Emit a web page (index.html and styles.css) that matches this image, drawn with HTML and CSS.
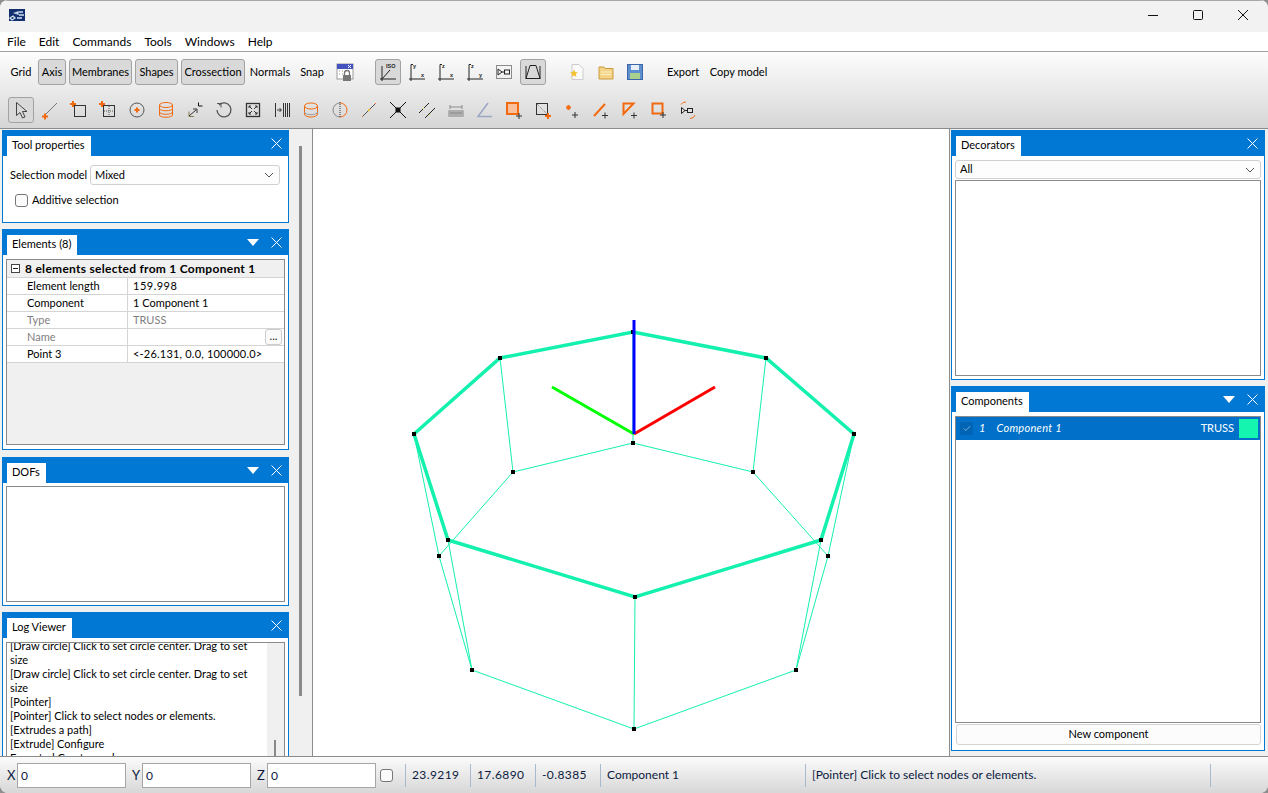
FILE: index.html
```html
<!DOCTYPE html>
<html lang="en">
<head>
<meta charset="utf-8">
<title>Truss modeller</title>
<link rel="stylesheet" href="styles.css">
</head>
<body>
<div class="app">
  <header class="titlebar">
    <svg class="applogo" width="16" height="12" viewBox="0 0 16 12"><rect width="16" height="12" fill="#12306e"/><path d="M1 9l3-2 2 2-3 2zM6 4l3-1v2zM10 3h4M10 6h5M8 9h5" stroke="#cfe0f5" stroke-width="1.3" fill="none"/></svg>
    <div class="winctl">
      <svg width="12" height="12" viewBox="0 0 12 12"><path d="M1 6.500h10" stroke="#111" fill="none"/></svg>
      <svg width="12" height="12" viewBox="0 0 12 12"><rect x="1.500" y="1.500" width="9" height="9" rx="1" stroke="#111" fill="none"/></svg>
      <svg width="12" height="12" viewBox="0 0 12 12"><path d="M1 1l10 10M11 1L1 11" stroke="#111" fill="none"/></svg>
    </div>
  </header>
  <nav class="menubar"><span>File</span><span>Edit</span><span>Commands</span><span>Tools</span><span>Windows</span><span>Help</span></nav>

  <div class="toolbar">
    <div class="row row1">
      <span class="t w26">Grid</span>
      <span class="t w28 on ml1">Axis</span>
      <span class="t w63 on">Membranes</span>
      <span class="t w43 on">Shapes</span>
      <span class="t w64 on">Crossection</span>
      <span class="t w44">Normals</span>
      <span class="t w34">Snap</span>
      <span class="i">
        <svg viewBox="0 0 20 20"><rect x="2" y="2" width="16" height="15" fill="#fff" stroke="#999"/><rect x="2" y="2" width="16" height="5" fill="#4452bd"/><path d="M13 3l3 3M16 3l-3 3" stroke="#fff"/><path d="M4 9h1M7 9h1M10 9h1M4 12h1M7 12h1" stroke="#999"/><rect x="8" y="13" width="8" height="6" fill="#777"/><path d="M9.500 13v-2a2.500 2.500 0 0 1 5 0v2" fill="none" stroke="#777" stroke-width="1.300"/></svg>
      </span>
      <span class="i on ml14">
        <svg viewBox="0 0 20 20"><path d="M4 4v13h14M4 17L12 8" fill="none" stroke="#222"/><path d="M2 17h2M4 17v2" stroke="#222"/><text x="8" y="6" class="mini">ISO</text></svg>
      </span>
      <span class="i"><svg viewBox="0 0 20 20"><path d="M4 2.500v14.500h14M4 2.500h2M2 17h2M4 17v2" fill="none" stroke="#222"/><text x="6" y="6" class="mini">y</text><text x="14" y="15" class="mini">x</text></svg></span>
      <span class="i"><svg viewBox="0 0 20 20"><path d="M4 2.500v14.500h14M4 2.500h2M2 17h2M4 17v2" fill="none" stroke="#222"/><text x="6" y="6" class="mini">z</text><text x="14" y="15" class="mini">x</text></svg></span>
      <span class="i"><svg viewBox="0 0 20 20"><path d="M4 2.500v14.500h14M4 2.500h2M2 17h2M4 17v2" fill="none" stroke="#222"/><text x="6" y="6" class="mini">z</text><text x="14" y="15" class="mini">y</text></svg></span>
      <span class="i"><svg viewBox="0 0 20 20"><rect x="2.500" y="3.500" width="15" height="13" fill="none" stroke="#222" stroke-dasharray="1 1"/><path d="M4 7v6l4-3zM8 10h2" fill="none" stroke="#222"/><rect x="10.500" y="8" width="5" height="4" fill="none" stroke="#222"/></svg></span>
      <span class="i on"><svg viewBox="0 0 20 20"><path d="M3 4v13M17 4v13M3 16.500h14M3 16.500L7 3.500h6l4 13" fill="none" stroke="#222"/></svg></span>
      <span class="i ml15"><svg viewBox="0 0 20 20"><path d="M5 2.500h7l4 4v11H5z" fill="#fafafa" stroke="#ccc"/><path d="M7 7.500l1.200 2.400 2.600.4-1.900 1.800.5 2.600L7 13.500l-2.400 1.200.5-2.600-1.900-1.800 2.600-.4z" fill="#f2c230"/></svg></span>
      <span class="i"><svg viewBox="0 0 20 20"><path d="M3 5h5l1 1.500h8V17H3z" fill="#f5d488" stroke="#c99a3c"/><path d="M5 10h10M5 12.500h10" stroke="#fbeec4"/></svg></span>
      <span class="i"><svg viewBox="0 0 20 20"><rect x="2.500" y="2.500" width="15" height="15" fill="#5d8fd0" stroke="#3b66a8"/><rect x="6" y="3" width="8" height="5" fill="#e8eef7"/><rect x="5" y="11" width="10" height="6" fill="#a9d08e"/></svg></span>
      <span class="t w38 ml13">Export</span>
      <span class="t w61 ml3">Copy model</span>
    </div>
    <div class="row row2">
      <span class="i on"><svg viewBox="0 0 20 20"><path d="M5.500 2.500v13l3.500-3 2.500 5.500 2.500-1-2.500-5.500h4.500z" fill="none" stroke="#444"/></svg></span>
      <span class="i"><svg viewBox="0 0 20 20"><path d="M6 14L17 3" stroke="#777"/><path d="M2 16.500h6M5 13.500v6" stroke="#f26a10" stroke-width="2"/></svg></span>
      <span class="i"><svg viewBox="0 0 20 20"><rect x="5.500" y="5.500" width="11" height="11" fill="none" stroke="#333"/><path d="M1 4h6M4 1v6" stroke="#f26a10" stroke-width="2"/></svg></span>
      <span class="i"><svg viewBox="0 0 20 20"><rect x="5.500" y="5.500" width="11" height="11" fill="none" stroke="#333"/><path d="M11 6v10M6 11h10" stroke="#555" stroke-dasharray="1 1"/><path d="M1 4h6M4 1v6" stroke="#f26a10" stroke-width="2"/></svg></span>
      <span class="i"><svg viewBox="0 0 20 20"><circle cx="10" cy="10" r="7" fill="none" stroke="#555"/><path d="M7.500 10h5M10 7.500v5" stroke="#f26a10" stroke-width="2"/></svg></span>
      <span class="i"><svg viewBox="0 0 20 20"><ellipse cx="10" cy="5" rx="6.500" ry="2.500" fill="none" stroke="#f26a10"/><path d="M3.500 5v10c0 3 13 3 13 0V5M3.500 8.500c0 3 13 3 13 0M3.500 12c0 3 13 3 13 0" fill="none" stroke="#f26a10"/></svg></span>
      <span class="i"><svg viewBox="0 0 20 20"><path d="M4 11.500v5h5" fill="none" stroke="#8a7a55"/><path d="M4 16l7-6M8 9h4v4" fill="none" stroke="#333"/><path d="M13.500 2.500v3.500h4" fill="none" stroke="#111"/></svg></span>
      <span class="i"><svg viewBox="0 0 20 20"><path d="M5 5a7 7 0 1 1-2 5" fill="none" stroke="#555" stroke-width="1.300"/><path d="M3 3.500h4v4" fill="none" stroke="#555"/></svg></span>
      <span class="i"><svg viewBox="0 0 20 20"><rect x="3.500" y="3.500" width="13" height="13" fill="none" stroke="#333" stroke-width="1.300"/><path d="M6 6l3 3M14 6l-3 3M6 14l3-3M14 14l-3-3M6 6h2M6 6v2M14 6h-2M14 6v2M6 14h2M6 14v-2M14 14h-2M14 14v-2" stroke="#333" fill="none"/></svg></span>
      <span class="i"><svg viewBox="0 0 20 20"><path d="M3.500 3v14M5 10h4M7.500 8l2 2-2 2M11.500 3v14M13.500 3v14M15.500 3v14M17.500 3v14" stroke="#333" fill="none"/></svg></span>
      <span class="i"><svg viewBox="0 0 20 20"><ellipse cx="10" cy="6" rx="6.500" ry="3" fill="none" stroke="#f26a10"/><path d="M3.500 6v8c0 4 13 4 13 0V6" fill="none" stroke="#f26a10"/><path d="M3.500 12c0 3.500 13 3.500 13 0" fill="none" stroke="#999"/></svg></span>
      <span class="i"><svg viewBox="0 0 20 20"><path d="M10 3a7 7 0 0 0 0 14" fill="none" stroke="#888"/><path d="M10 3a7 7 0 0 1 0 14" fill="none" stroke="#f26a10"/><path d="M10 2v16" stroke="#333" stroke-dasharray="1 1"/></svg></span>
      <span class="i"><svg viewBox="0 0 20 20"><path d="M3 17L17 3" stroke="#555"/><path d="M9 11l2-2" stroke="#e8b010" stroke-width="1.500"/><path d="M3 17l1-1M16 4l1-1" stroke="#f26a10"/></svg></span>
      <span class="i"><svg viewBox="0 0 20 20"><path d="M2 2l16 16M18 2L2 18" stroke="#111"/><rect x="7.500" y="7.500" width="5" height="5" fill="#111"/></svg></span>
      <span class="i"><svg viewBox="0 0 20 20"><path d="M2 13L12 3M8 18L18 8" stroke="#222"/><path d="M6 9l1-1M12 15l1-1" stroke="#e8d820"/></svg></span>
      <span class="i"><svg viewBox="0 0 20 20"><rect x="2" y="10" width="16" height="7" rx="1" fill="#aeaeae"/><path d="M4 7h12M4 5v4M16 5v4M4 13h12" stroke="#8a8a8a" fill="none"/></svg></span>
      <span class="i"><svg viewBox="0 0 20 20"><path d="M13 3L3 16.500h14" fill="none" stroke="#9aa6c4" stroke-width="1.500"/></svg></span>
      <span class="i"><svg viewBox="0 0 20 20"><rect x="3" y="3" width="11" height="11" fill="#fbbf9c" stroke="#f26a10" stroke-width="2"/><path d="M12 16h6M15 13v6" stroke="#333"/></svg></span>
      <span class="i"><svg viewBox="0 0 20 20"><rect x="3.500" y="3.500" width="11" height="11" fill="none" stroke="#333"/><path d="M4 4l10 10" stroke="#777" stroke-dasharray="1 1"/><path d="M12 16h6M15 13v6" stroke="#f26a10" stroke-width="2"/></svg></span>
      <span class="i"><svg viewBox="0 0 20 20"><path d="M4 7.500h5M6.500 5v5" stroke="#f26a10" stroke-width="2.200"/><path d="M10 15h6M13 12v6" stroke="#333"/></svg></span>
      <span class="i"><svg viewBox="0 0 20 20"><path d="M3 16L14 4" stroke="#f26a10" stroke-width="2"/><path d="M11 15.500h6M14 12.500v6" stroke="#333"/></svg></span>
      <span class="i"><svg viewBox="0 0 20 20"><path d="M3.500 3.500h10L3.500 14z" fill="none" stroke="#f26a10" stroke-width="2"/><path d="M11 15.500h6M14 12.500v6" stroke="#333"/></svg></span>
      <span class="i"><svg viewBox="0 0 20 20"><rect x="3.500" y="3.500" width="10" height="10" fill="none" stroke="#f26a10" stroke-width="2"/><path d="M11 15h6M14 12v6" stroke="#333"/></svg></span>
      <span class="i"><svg viewBox="0 0 20 20"><path d="M3 4.500a5 5 0 0 1 5-2.500M12 18.500a5 5 0 0 0 5-3.500" fill="none" stroke="#f26a10"/><path d="M3.500 7.500v6l3.500-3zM7 10.500h2" fill="none" stroke="#222"/><rect x="9.500" y="8.500" width="5" height="4" fill="none" stroke="#222"/></svg></span>
    </div>
  </div>

  <main class="main">
    <aside class="leftcol">
      <div class="stack">
        <section class="panel p-tool">
          <div class="phead"><span class="ptab">Tool properties</span><span class="pbtns"><svg class="x" viewBox="0 0 11 11"><path d="M.5.5l10 10M10.500.5l-10 10"/></svg></span></div>
          <div class="pbody tool-body">
            <div class="selrow"><span class="sellab">Selection model</span><div class="combo grow"><span>Mixed</span><svg class="chev" viewBox="0 0 10 6"><path d="M1 1l4 4 4-4"/></svg></div></div>
            <label class="checkrow"><span class="cb"></span><span>Additive selection</span></label>
          </div>
        </section>
        <section class="panel p-elem">
          <div class="phead"><span class="ptab">Elements (8)</span><span class="pbtns"><span class="tri"></span><svg class="x" viewBox="0 0 11 11"><path d="M.5.5l10 10M10.500.5l-10 10"/></svg></span></div>
          <div class="pbody prop-wrap">
            <div class="props">
              <div class="phdr"><span class="minus"></span><b>8 elements selected from 1 Component 1</b></div>
              <div class="prow"><span>Element length</span><span class="num">159.998</span></div>
              <div class="prow"><span>Component</span><span>1 Component 1</span></div>
              <div class="prow dim"><span>Type</span><span>TRUSS</span></div>
              <div class="prow dim"><span>Name</span><span></span><em class="dots">...</em></div>
              <div class="prow"><span>Point 3</span><span class="pt">&lt;-26.131, 0.0, 100000.0&gt;</span></div>
            </div>
          </div>
        </section>
        <section class="panel p-dof">
          <div class="phead"><span class="ptab">DOFs</span><span class="pbtns"><span class="tri"></span><svg class="x" viewBox="0 0 11 11"><path d="M.5.5l10 10M10.500.5l-10 10"/></svg></span></div>
          <div class="pbody inset-wrap"><div class="inset"></div></div>
        </section>
        <section class="panel p-log">
          <div class="phead"><span class="ptab">Log Viewer</span><span class="pbtns"><svg class="x" viewBox="0 0 11 11"><path d="M.5.5l10 10M10.500.5l-10 10"/></svg></span></div>
          <div class="pbody log-wrap">
            <div class="log">
              <div class="logtext">
                <p>[Draw circle] Click to set circle center. Drag to set size</p>
                <p>[Draw circle] Click to set circle center. Drag to set size</p>
                <p>[Pointer]</p>
                <p>[Pointer] Click to select nodes or elements.</p>
                <p>[Extrudes a path]</p>
                <p>[Extrude] Configure</p>
                <p>Executed Create mesh</p>
              </div>
              <div class="vscroll"><span class="thumb"></span></div>
            </div>
          </div>
        </section>
      </div>
      <div class="split"><span class="grip"></span></div>
    </aside>

    <div class="canvas">
      <svg class="scene" viewBox="313 129 636 627" width="636" height="627">
        <g class="thin">
          <path d="M633 443L753 472L828 556L796 670L634 729L472 670L439 556L513 472Z"/>
          <path d="M633 332V443M500 358L513 472M766 358L753 472M414 434L439 556M854 434L828 556M448 540L472 670M821 540L796 670M635 597L634 729"/>
        </g>
        <path class="thick" d="M633 332L766 358L854 434L821 540L635 597L448 540L414 434L500 358Z"/>
        <g class="nodes">
          <rect x="631" y="441" width="4" height="4"/><rect x="751" y="470" width="4" height="4"/><rect x="826" y="554" width="4" height="4"/><rect x="794" y="668" width="4" height="4"/><rect x="632" y="727" width="4" height="4"/><rect x="470" y="668" width="4" height="4"/><rect x="437" y="554" width="4" height="4"/><rect x="511" y="470" width="4" height="4"/>
          <rect x="631" y="330" width="4" height="4"/><rect x="764" y="356" width="4" height="4"/><rect x="852" y="432" width="4" height="4"/><rect x="819" y="538" width="4" height="4"/><rect x="633" y="595" width="4" height="4"/><rect x="446" y="538" width="4" height="4"/><rect x="412" y="432" width="4" height="4"/><rect x="498" y="356" width="4" height="4"/>
        </g>
        <path class="ax" stroke="#00ff00" d="M634 434L552 387"/>
        <path class="ax" stroke="#ff0000" d="M634 434L715 387"/>
        <path class="ax" stroke="#0000ff" d="M634 320V434"/>
      </svg>
    </div>

    <aside class="rightcol">
      <section class="panel p-deco">
        <div class="phead"><span class="ptab">Decorators</span><span class="pbtns"><svg class="x" viewBox="0 0 11 11"><path d="M.5.5l10 10M10.500.5l-10 10"/></svg></span></div>
        <div class="pbody deco-body">
          <div class="combo flat"><span>All</span><svg class="chev" viewBox="0 0 10 6"><path d="M1 1l4 4 4-4"/></svg></div>
          <div class="inset"></div>
        </div>
      </section>
      <section class="panel p-comp">
        <div class="phead"><span class="ptab">Components</span><span class="pbtns"><span class="tri"></span><svg class="x" viewBox="0 0 11 11"><path d="M.5.5l10 10M10.500.5l-10 10"/></svg></span></div>
        <div class="pbody comp-body">
          <div class="inset complist">
            <div class="compitem">
              <span class="compcheck"><svg viewBox="0 0 10 8"><path d="M1 4l2.500 2.500L9 1"/></svg></span>
              <i class="compnum">1</i><i class="compname">Component 1</i>
              <span class="comptype">TRUSS</span><span class="swatch"></span>
            </div>
          </div>
          <div class="newbtn">New component</div>
        </div>
      </section>
    </aside>
  </main>

  <footer class="status">
    <span class="lab">X</span><span class="field">0</span>
    <span class="lab">Y</span><span class="field">0</span>
    <span class="lab">Z</span><span class="field">0</span>
    <span class="cb cb-s"></span>
    <span class="cell c-num">23.9219</span>
    <span class="cell c-num">17.6890</span>
    <span class="cell c-num">-0.8385</span>
    <span class="cell c-comp">Component 1</span>
    <span class="cell c-msg">[Pointer] Click to select nodes or elements.</span>
    <span class="cell"></span>
  </footer>
</div>
</body>
</html>
```
FILE: styles.css
```css
* { box-sizing: border-box; }
html, body { margin: 0; padding: 0; background: #8f8f8f; }
body { font: 11px/15px Lato, "Noto Sans", sans-serif; color: #000; }
.app { width: 1268px; height: 793px; display: flex; flex-direction: column; overflow: hidden; background: #f0f0f0; border-radius: 8px; }

.titlebar { height: 32px; flex: none; display: flex; align-items: center; background: #f2f2f2; padding-left: 9px; border-top: 1px solid #a8a8a8; }
.applogo { margin-top: -4px; }
.winctl { margin-left: auto; display: flex; gap: 33px; padding-right: 19px; margin-top: -3px; }

.menubar { height: 20px; flex: none; display: flex; gap: 13px; align-items: center; padding: 0 7px 1px; background: #fff; border-bottom: 1px solid #a3a3a3; font-size: 12px; }

.toolbar { height: 77px; flex: none; padding: 7px 0 0 8px; background: linear-gradient(#fdfdfd, #d6d6d6); border-bottom: 1px solid #8c8c8c; display: flex; flex-direction: column; gap: 12px; }
.row { display: flex; gap: 3px; height: 26px; align-items: center; }
.t { height: 26px; display: flex; align-items: center; justify-content: center; border: 1px solid transparent; border-radius: 3px; white-space: nowrap; padding-bottom: 1px; }
.i { width: 26px; height: 26px; display: flex; align-items: center; justify-content: center; border: 1px solid transparent; border-radius: 3px; flex: none; }
.i svg { width: 20px; height: 20px; display: block; }
.on { background: #d9d9d9; border-color: #a2a2a2; }
.mini { font: 700 5.500px "Liberation Sans", sans-serif; fill: #222; }
.w26 { width: 26px; } .w28 { width: 28px; } .w63 { width: 63px; } .w43 { width: 43px; } .w64 { width: 64px; }
.w44 { width: 44px; } .w34 { width: 34px; } .w38 { width: 38px; } .w61 { width: 61px; }
.ml1 { margin-left: 1px; } .ml3 { margin-left: 3px; } .ml13 { margin-left: 13px; } .ml14 { margin-left: 14px; } .ml15 { margin-left: 15px; }

.main { flex: 1; min-height: 0; display: flex; background: #f0f0f0; overflow: hidden; }
.leftcol { width: 313px; flex: none; display: flex; border-right: 1px solid #8c8c8c; padding: 1px 0 0 2px; }
.stack { width: 287px; flex: none; display: flex; flex-direction: column; overflow: hidden; }
.split { flex: 1; padding: 16px 0 0 10px; }
.grip { display: block; width: 3px; height: 550px; background: #8a8a8a; }

.panel { border: 1px solid #0078d4; display: flex; flex-direction: column; background: #f0f0f0; flex: none; }
.p-tool { height: 93px; margin-bottom: 6px; }
.p-elem { height: 221px; margin-bottom: 7px; }
.p-dof { height: 149px; margin-bottom: 6px; }
.p-log { height: 150px; }
.phead { height: 25px; flex: none; background: #0078d4; display: flex; align-items: flex-end; padding-left: 4px; }
.ptab { height: 20px; padding: 0 6px 3px 5px; background: #fff; display: flex; align-items: center; white-space: nowrap; }
.pbtns { margin-left: auto; align-self: stretch; display: flex; align-items: center; gap: 12px; padding-right: 6px; }
.x { width: 11px; height: 11px; display: block; }
.x path { fill: none; stroke: #fff; }
.tri { width: 0; height: 0; border: 6px solid transparent; border-top: 7px solid #fff; border-bottom: 0; }
.pbody { flex: 1; min-height: 0; }

.tool-body { background: #fff; padding: 9px 8px 0 7px; }
.selrow { display: flex; align-items: center; gap: 5px; }
.sellab { width: 75px; flex: none; white-space: nowrap; padding-bottom: 1px; }
.combo { height: 20px; display: flex; align-items: center; justify-content: space-between; padding: 0 5px 2px 4px; border: 1px solid #d0d0d0; border-radius: 3px; background: #fdfdfd; }
.combo .chev { margin-top: 2px; }
.grow { flex: 1; }
.chev { width: 10px; height: 6px; display: block; }
.chev path { fill: none; stroke: #555; }
.checkrow { display: flex; align-items: center; gap: 4px; margin: 9px 0 0 5px; }
.checkrow span:last-child { margin-top: -2px; }
.cb { width: 13px; height: 13px; border: 1px solid #777; border-radius: 3px; background: #fbfbfb; display: block; flex: none; }

.prop-wrap { padding: 4px 3px 4px; background: #fff; }
.props { height: 100%; border: 1px solid #8a8a8a; background: #f0f0f0; }
.phdr { height: 18px; display: flex; align-items: center; gap: 5px; padding-left: 4px; background: #f0f0f0; border-bottom: 1px solid #d4d4d4; }
.phdr b { font-size: 12px; letter-spacing: .28px; white-space: nowrap; }
.minus { width: 9px; height: 9px; border: 1px solid #444; position: relative; background: #fff; flex: none; }
.minus::after { content: ""; position: absolute; left: 1px; right: 1px; top: 3px; height: 1px; background: #222; }
.prow { height: 17px; display: grid; grid-template-columns: 121px 1fr; position: relative; background: #fff; border-bottom: 1px solid #d4d4d4; }
.prow span { padding: 0 0 2px 5px; display: flex; align-items: center; white-space: nowrap; }
.prow span:first-child { padding-left: 20px; border-right: 1px solid #d4d4d4; }
.prow .num { letter-spacing: .5px; }
.prow .pt { letter-spacing: .2px; }
.dim { color: #808080; }
.dots { position: absolute; right: 2px; top: 0; width: 17px; height: 16px; border: 1px solid #ccc; border-radius: 3px; background: #fafafa; font-style: normal; color: #222; text-align: center; line-height: 12px; }

.inset-wrap { padding: 3px; background: #fff; }
.inset { border: 1px solid #8a8a8a; background: #fff; height: 100%; }

.log-wrap { padding: 4px 3px 0; background: #fff; overflow: hidden; }
.log { height: 122px; border: 1px solid #8a8a8a; border-bottom: 0; display: flex; overflow: hidden; }
.logtext { flex: 1; padding: 0 3px; margin-top: -4px; }
.logtext p { margin: 0; line-height: 14px; }
.vscroll { width: 17px; flex: none; background: #f0f0f0; position: relative; }
.thumb { position: absolute; left: 7px; top: 97px; width: 2px; height: 20px; background: #8a8a8a; }

.canvas { width: 636px; flex: none; background: #fff; overflow: hidden; }
.scene { display: block; }
.thin { fill: none; stroke: #14f0ae; stroke-width: 1; }
.thick { fill: none; stroke: #14f0ae; stroke-width: 3.500; }
.nodes rect { fill: #000; }
.ax { stroke-width: 3; fill: none; }

.rightcol { flex: 1; border-left: 1px solid #8c8c8c; padding: 1px 0 0 1px; min-width: 0; }
.rightcol .panel { width: 314px; }
.p-deco { height: 250px; margin-bottom: 6px; }
.p-comp { height: 365px; }
.deco-body { background: #fff; padding: 4px 3px 3px; display: flex; flex-direction: column; }
.deco-body .inset { flex: 1; margin-top: 1px; height: auto; }
.flat { flex: none; height: 19px; }
.comp-body { background: #fff; padding: 4px 3px 5px; display: flex; flex-direction: column; }
.complist { flex: 1; height: auto; min-height: 0; }
.compitem { height: 23px; background: #0070c8; color: #fff; display: flex; align-items: center; padding: 0 2px 0 4px; font-style: italic; }
.compcheck { width: 13px; height: 13px; background: #0064b4; border-radius: 2px; display: flex; align-items: center; justify-content: center; }
.compcheck svg { width: 8px; height: 7px; display: block; }
.compcheck path { fill: none; stroke: #9cc6ea; }
.compnum { margin: -2px 0 0 6px; font-style: italic; }
.compname { margin: -2px 0 0 11px; font-style: italic; letter-spacing: .3px; }
.comptype { margin: -2px 0 0 auto; font-style: normal; }
.swatch { width: 19px; height: 19px; background: #14f5b0; margin-left: 5px; }
.newbtn { height: 21px; flex: none; margin-top: 1px; margin-left: 1px; padding-bottom: 2px; border: 1px solid #d4d4d4; border-radius: 3px; background: #fcfcfc; display: flex; align-items: center; justify-content: center; }

.status { height: 37px; flex: none; display: flex; align-items: center; padding: 0 0 0 7px; border-top: 1px solid #8c8c8c; background: linear-gradient(#fbfbfb, #d7d7d7); color: #0c1a40; border-radius: 0 0 8px 8px; font-size: 12px; }
.lab { font-size: 13px; width: 10px; flex: none; }
.field { width: 109px; height: 25px; border: 1px solid #a6a6a6; background: #fff; margin-right: 6px; display: flex; align-items: center; padding-left: 3px; flex: none; }
.cb-s { margin-left: -2px; margin-right: 12px; }
.cell { height: 23px; border-left: 1px solid #a9bace; display: flex; align-items: center; padding: 0 0 2px 6px; white-space: nowrap; flex: none; }
.c-num { width: 65px; letter-spacing: .4px; }
.c-comp { width: 205px; }
.c-msg { width: 405px; }
```
